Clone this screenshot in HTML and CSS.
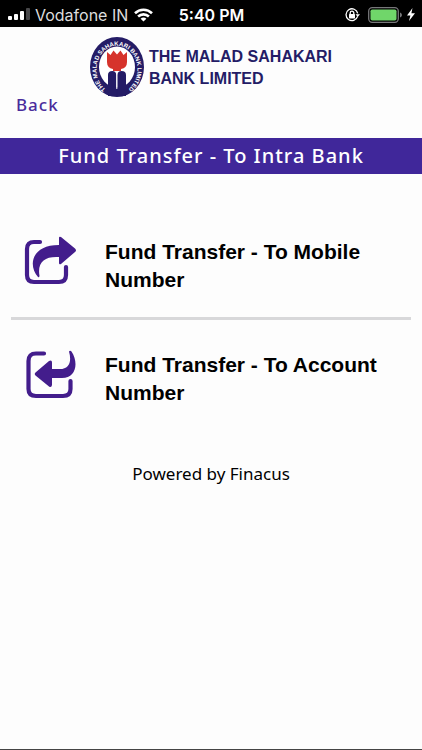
FILE: index.html
```html
<!DOCTYPE html>
<html lang="en">
<head>
  <meta charset="UTF-8" />
  <meta name="viewport" content="width=device-width, initial-scale=1.0" />
  <title>Fund Transfer - To Intra Bank</title>
  <link rel="stylesheet" href="styles.css">
</head>
<body>
  <div class="status-bar">
    <div class="status-left">
      <svg width="23" height="13" viewBox="0 0 23 13" fill="#fff" aria-hidden="true">
        <rect x="0" y="8" width="4" height="4" rx="1"/>
        <rect x="6" y="6" width="4" height="6" rx="1"/>
        <rect x="12" y="3" width="4" height="9" rx="1"/>
        <rect x="18" y="0" width="4" height="12" rx="1" fill="#48484a"/>
      </svg>
      <span>Vodafone IN</span>
      <svg class="wifi" width="19" height="14" viewBox="0 0 19 14" fill="none" stroke="#fff" stroke-width="2.6" aria-hidden="true">
        <path d="M1 5.2C5.8.6 13.2.6 18 5.2"/>
        <path d="M4.1 8.5C7.2 5.6 11.8 5.6 14.9 8.5"/>
        <path d="M9.5 13.6L6.6 10.7C8.3 9.2 10.7 9.2 12.4 10.7Z" fill="#fff" stroke="none"/>
      </svg>
    </div>
    <span class="status-time">5:40 PM</span>
    <div class="status-right">
      <svg width="15" height="14" viewBox="0 0 15 14" fill="none" stroke="#fff" stroke-width="1.3" aria-hidden="true">
        <path d="M12.6 8.4A5.9 5.9 0 1 1 12.7 5.4"/>
        <path d="M10.5 6.2H15L12.7 9Z" fill="#fff" stroke="none"/>
        <rect x="4" y="6" width="6" height="4.4" rx=".6" fill="#fff" stroke="none"/>
        <path d="M5.2 6.4V5A1.8 1.8 0 0 1 8.8 5V6.4"/>
      </svg>
      <svg width="35" height="16" viewBox="0 0 35 16" aria-hidden="true">
        <rect x=".7" y=".7" width="29.6" height="14.6" rx="3.5" fill="none" stroke="#77777a" stroke-width="1.3"/>
        <rect x="2.5" y="2.5" width="26" height="11" rx="1.8" fill="#70d66a"/>
        <path d="M32 5.5C34.6 6.3 34.6 9.7 32 10.5Z" fill="#77777a"/>
      </svg>
      <svg width="8" height="13" viewBox="0 0 8 13" fill="#fff" aria-hidden="true">
        <path d="M5.5 0L0 7.4H3.4L2 13L8 5.3H4.4Z"/>
      </svg>
    </div>
  </div>

  <header class="header">
    <div class="brand">
      <svg class="logo" width="54" height="60" viewBox="0 0 54 60" aria-label="The Malad Sahakari Bank Limited logo">
        <ellipse cx="27" cy="30" rx="27" ry="30" fill="#241c66"/>
        <ellipse cx="27" cy="30" rx="18" ry="20.5" fill="#fff"/>
        <path d="M18 59V38Q18 34 22.300 34Q26 34 26.300 38V59Z" fill="#241c66"/>
        <path d="M27.300 59V38Q27.600 34 31.500 34Q36 34 36 38V59Z" fill="#241c66"/>
        <path d="M26.800 36V52" stroke="#fff" stroke-width="1"/>
        <path d="M17 15L20.500 18L23.500 13.500L27 17.500L30.500 13.500L33.500 18L37 15V25Q37 31 31 32V34H23V32Q17 31 17 25Z" fill="#d6332c"/>
        <path id="ring" d="M16.500 52.500A20.500 23.500 0 1 1 37.500 52.500" fill="none"/>
        <text class="ring-text"><textPath href="#ring" startOffset="50%" text-anchor="middle">THE MALAD SAHAKARI BANK LIMITED</textPath></text>
      </svg>
      <div class="brand-name">THE MALAD SAHAKARI<br>BANK LIMITED</div>
    </div>
    <a class="back" href="#">Back</a>
  </header>

  <h1 class="title">Fund Transfer - To Intra Bank</h1>

  <main class="content">
    <nav class="menu">
      <a class="menu-item" href="#">
        <svg width="54" height="50" viewBox="0 0 54 50" aria-hidden="true">
          <path d="M17 6H11Q4 6 4 13V39Q4 46 11 46H36Q43 46 43 39V31" fill="none" stroke="#431d8c" stroke-width="4.200" stroke-linecap="round"/>
          <path d="M15 41C5 30 8 9 36 9V2Q36 0 38 1L52 12.500Q54 14.500 52 16L38 28Q36 29 36 27V21C22 20 14 26 16.500 40Q16 42 15 41Z" fill="#431d8c"/>
        </svg>
        <span>Fund Transfer - To Mobile Number</span>
      </a>
      <a class="menu-item" href="#">
        <svg width="54" height="50" viewBox="0 0 54 50" aria-hidden="true">
          <path d="M21 3.500H13Q5.500 3.500 5.500 11V39Q5.500 46 13 46H40Q47.500 46 47.500 39V31" fill="none" stroke="#431d8c" stroke-width="4.200" stroke-linecap="round"/>
          <path d="M46 1.500Q47 0 48.500 1.500C56 13 53 28 39 28H29V35Q28.500 38 26 36.500L12.500 25.500Q11 24 12.500 22.500L26 11Q29 9.500 29 12.500V19H37C46 19 49 12 46 1.500Z" fill="#431d8c"/>
        </svg>
        <span>Fund Transfer - To Account Number</span>
      </a>
    </nav>
  </main>

  <footer class="footer">Powered by Finacus</footer>
</body>
</html>
```
FILE: styles.css
```css
* {
  box-sizing: border-box;
}
body {
  background-color: #fdfdfd;
  color: #000;
  font-family: "Noto Sans", sans-serif;
  margin: 0;
  min-height: 100vh;
  border-bottom: 1px solid #444;
}
.status-bar {
  display: grid;
  grid-template-columns: 1fr auto 1fr;
  align-items: center;
  height: 27px;
  padding: 2px 7px 0 8px;
  background-color: #000;
  color: #fff;
  font-family: Inter, sans-serif;
  font-size: 16px;
  line-height: 24px;
}
.status-left,
.status-right {
  display: flex;
  align-items: center;
  gap: 4px;
}
.status-left {
  color: #ddd;
}
.wifi {
  margin-left: 2px;
}
.status-time {
  font-weight: 600;
}
.status-right {
  justify-content: flex-end;
}
.status-right svg:first-child {
  margin-right: 4px;
}
.header {
  padding: 10px 16px 21px;
}
.brand {
  display: flex;
  align-items: flex-start;
  justify-content: center;
  gap: 5px;
}
.brand-name {
  padding-top: 9px;
  color: #241c66;
  font-family: "Liberation Sans", sans-serif;
  font-size: 16px;
  font-weight: bold;
  line-height: 22px;
}
.ring-text {
  fill: #fff;
  font-family: "Liberation Sans", sans-serif;
  font-size: 6px;
  font-weight: bold;
}
.back {
  display: block;
  width: fit-content;
  margin-top: -4px;
  color: #4a2c9c;
  font-size: 17px;
  font-weight: 500;
  letter-spacing: 1px;
  line-height: 24px;
  text-decoration: none;
}
.title {
  margin: 0;
  padding: 4px 0;
  background-color: #40279a;
  color: #fff;
  font-size: 20px;
  font-weight: 500;
  letter-spacing: 1px;
  line-height: 28px;
  text-align: center;
}
.content {
  padding: 31px 11px 0;
}
.menu-item {
  display: flex;
  align-items: center;
  gap: 28px;
  min-height: 112px;
  padding: 0 12px;
  color: #000;
  font-family: "Liberation Sans", sans-serif;
  font-size: 21px;
  font-weight: bold;
  line-height: 28px;
  text-decoration: none;
}
.menu-item svg {
  flex-shrink: 0;
}
.menu-item span {
  padding-top: 9px;
}
.menu-item + .menu-item {
  border-top: 3px solid #d8d8da;
}
.footer {
  padding: 33px 0;
  font-size: 17px;
  line-height: 24px;
  text-align: center;
}
```
